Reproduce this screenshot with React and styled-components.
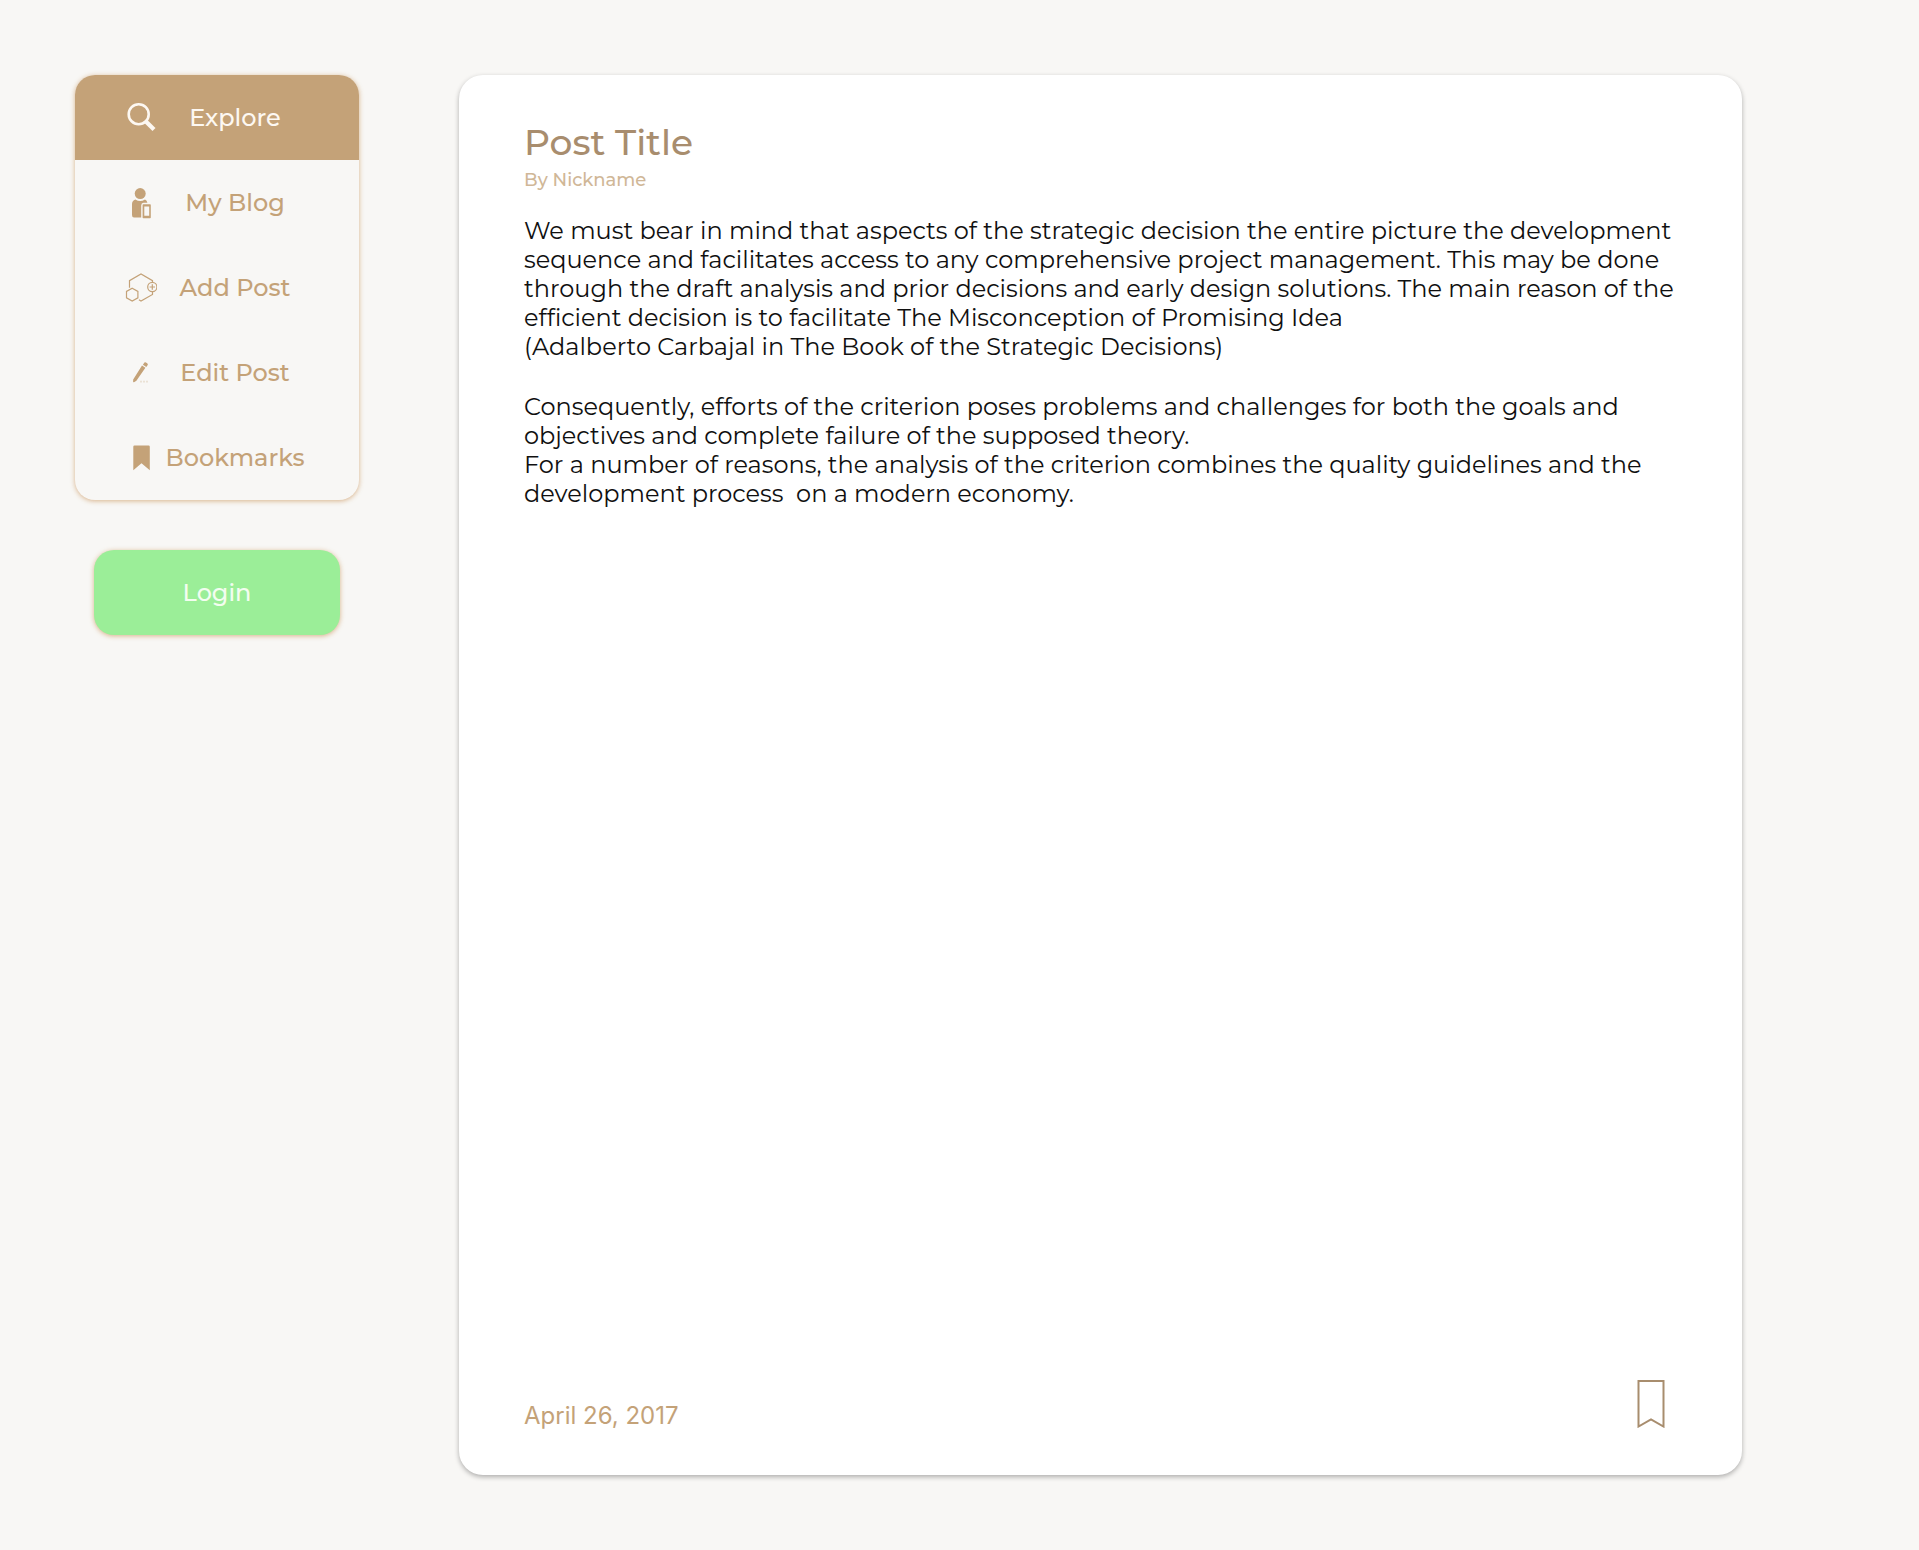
import React from "react";
import styled, { createGlobalStyle } from "styled-components";

const GlobalStyle = createGlobalStyle`
  *, *::before, *::after { box-sizing: border-box; }
  body {
    margin: 0;
    background: #f8f7f5;
    color: #101010;
    font-family: Montserrat, Inter, "Noto Sans", sans-serif;
  }
`;

const Page = styled.div`
  display: flex;
  align-items: flex-start;
  gap: 100px;
  min-height: 100vh;
  padding: 75px 177px 75px 75px;
`;

const Sidebar = styled.aside`
  display: flex;
  flex-direction: column;
  align-items: center;
  gap: 50px;
  flex: 0 0 284px;
`;

const Menu = styled.nav`
  width: 100%;
  border-radius: 20px;
  overflow: hidden;
  box-shadow: 0 1px 5px rgba(208, 160, 110, 0.8);
  background: #f8f7f5;
`;

const MenuLink = styled.a`
  display: grid;
  grid-template-columns: 52px 136px;
  align-items: center;
  justify-items: center;
  height: 85px;
  padding-left: 40px;
  background: ${({ $active }) => ($active ? "#c4a278" : "transparent")};
  color: ${({ $active }) => ($active ? "#fdf8f2" : "#c4a278")};
  font-size: 24px;
  font-weight: 500;
  line-height: 30px;
  text-decoration: none;
  white-space: nowrap;
`;

const Icon = styled.svg`
  display: block;
  width: 32px;
  height: 32px;
`;

const LoginButton = styled.button`
  width: 246px;
  height: 85px;
  border: 0;
  border-radius: 20px;
  background: #9bee98;
  box-shadow: 0 1px 5px rgba(208, 160, 110, 0.8);
  color: #f3fdf0;
  font: inherit;
  font-size: 24px;
  font-weight: 500;
  line-height: 30px;
  cursor: pointer;
`;

const Post = styled.article`
  display: flex;
  flex-direction: column;
  flex: 1;
  min-width: 0;
  min-height: calc(100vh - 150px);
  padding: 45px 65px 47px;
  border-radius: 24px;
  background: #fff;
  box-shadow: 0 2px 5px rgba(0, 0, 0, 0.3);
`;

const Title = styled.h1`
  margin: 0;
  color: #a88d6e;
  font-size: 36px;
  font-weight: 500;
  line-height: 44px;
`;

const Author = styled.p`
  margin: 4px 0 24px;
  color: #d0b797;
  font-size: 18px;
  font-weight: 500;
  line-height: 24px;
`;

const Body = styled.div`
  display: flex;
  flex-direction: column;
  gap: 31px;
`;

const Paragraph = styled.p`
  margin: 0;
  font-size: 24px;
  line-height: 29px;
  white-space: pre-wrap;
`;

const Footer = styled.footer`
  display: flex;
  align-items: flex-end;
  justify-content: space-between;
  margin-top: auto;
  padding-right: 12px;
`;

const PostDate = styled.time`
  color: #c4a278;
  font-family: Inter, sans-serif;
  font-size: 24px;
  line-height: 24px;
`;

const SaveButton = styled.button`
  display: block;
  padding: 0;
  border: 0;
  background: none;
  color: #a88d6e;
  cursor: pointer;

  svg { display: block; }
`;

const SearchIcon = () => (
  <Icon viewBox="0 0 32 32" fill="none" stroke="currentColor" aria-hidden="true">
    <circle cx="13.7" cy="12.2" r="10" strokeWidth="2.6" />
    <path d="M20.4 19 29 27.6" strokeWidth="4.2" />
  </Icon>
);

const PersonIcon = () => (
  <Icon viewBox="0 0 32 32" fill="currentColor" aria-hidden="true">
    <circle cx="15.2" cy="6.6" r="5.5" />
    <path d="M10.4 12.5Q15.2 15.6 20 12.5 22 13.4 22.4 15.8H18.5Q16.2 16 16.2 18.5V30.5H9Q7 30.5 7 28V17Q7 13.5 10.4 12.5Z" />
    <path fillRule="evenodd" d="M18.4 17.3H25Q25.8 17.3 25.8 18V30.4Q25.8 31.2 25 31.2H18.4Q17.6 31.2 17.6 30.4V18Q17.6 17.3 18.4 17.3ZM19.3 19.4V28.8H24.2V19.4Z" />
  </Icon>
);

const HexagonsIcon = () => (
  <Icon viewBox="0 0 32 32" fill="none" stroke="currentColor" strokeWidth="1.2" aria-hidden="true">
    <path d="M4.5 15.8V8.7L16 2 27.5 8.7V10M27.5 20V22.4L16 29 13.9 27.8" />
    <path d="M7.2 16.2 12.9 19.4V25.8L7.2 29.1 1.5 25.8V19.4Z" />
    <circle cx="27.3" cy="15" r="4.6" />
    <path d="M24.6 15H30M27.3 12.3V17.7" />
  </Icon>
);

const PencilIcon = () => (
  <Icon viewBox="0 0 32 32" fill="currentColor" aria-hidden="true">
    <path d="M8.2 22.4 17 8.6 20.4 10.8 11.4 23.8 9 25.3Q8 25.5 8.1 24.5Z" />
    <path d="M17.9 7.7 19.4 5.5Q20.2 4.9 21 5.5L22.4 6.5Q23.2 7.2 22.7 8L21.3 9.9Z" />
    <path d="M15 23.7h2v1.8h-2zM18 23.7h2v1.8h-2zM21 23.7h2v1.8h-2z" opacity="0.25" />
  </Icon>
);

const BookmarkIcon = () => (
  <Icon viewBox="0 0 32 32" fill="currentColor" aria-hidden="true">
    <path d="M9.5 3.5H23.6Q24.8 3.5 24.8 4.7V28.2L16.5 21.2 8.3 28.2V4.7Q8.3 3.5 9.5 3.5Z" />
  </Icon>
);

const menu = [
  { label: "Explore", icon: SearchIcon, active: true },
  { label: "My Blog", icon: PersonIcon },
  { label: "Add Post", icon: HexagonsIcon },
  { label: "Edit Post", icon: PencilIcon },
  { label: "Bookmarks", icon: BookmarkIcon },
];

const paragraphs = [
  `We must bear in mind that aspects of the strategic decision the entire picture the development
sequence and facilitates access to any comprehensive project management. This may be done
through the draft analysis and prior decisions and early design solutions. The main reason of the
efficient decision is to facilitate The Misconception of Promising Idea
(Adalberto Carbajal in The Book of the Strategic Decisions)`,
  `Consequently, efforts of the criterion poses problems and challenges for both the goals and
objectives and complete failure of the supposed theory.
For a number of reasons, the analysis of the criterion combines the quality guidelines and the
development process  on a modern economy.`,
];

export default function App() {
  return (
    <>
      <GlobalStyle />
      <Page>
        <Sidebar>
          <Menu>
            {menu.map(({ label, icon: Glyph, active }) => (
              <MenuLink key={label} href="#" $active={active} aria-current={active ? "page" : undefined}>
                <Glyph />
                <span>{label}</span>
              </MenuLink>
            ))}
          </Menu>
          <LoginButton type="button">Login</LoginButton>
        </Sidebar>
        <Post>
          <Title>Post Title</Title>
          <Author>By Nickname</Author>
          <Body>
            {paragraphs.map((text) => (
              <Paragraph key={text}>{text}</Paragraph>
            ))}
          </Body>
          <Footer>
            <PostDate dateTime="2017-04-26">April 26, 2017</PostDate>
            <SaveButton type="button" aria-label="Bookmark this post">
              <svg width="28" height="48" viewBox="0 0 28 48" fill="none" stroke="currentColor" strokeWidth="2" aria-hidden="true">
                <path d="M1.5 1H26.5V46.5L14 39.5 1.5 46.5Z" />
              </svg>
            </SaveButton>
          </Footer>
        </Post>
      </Page>
    </>
  );
}
